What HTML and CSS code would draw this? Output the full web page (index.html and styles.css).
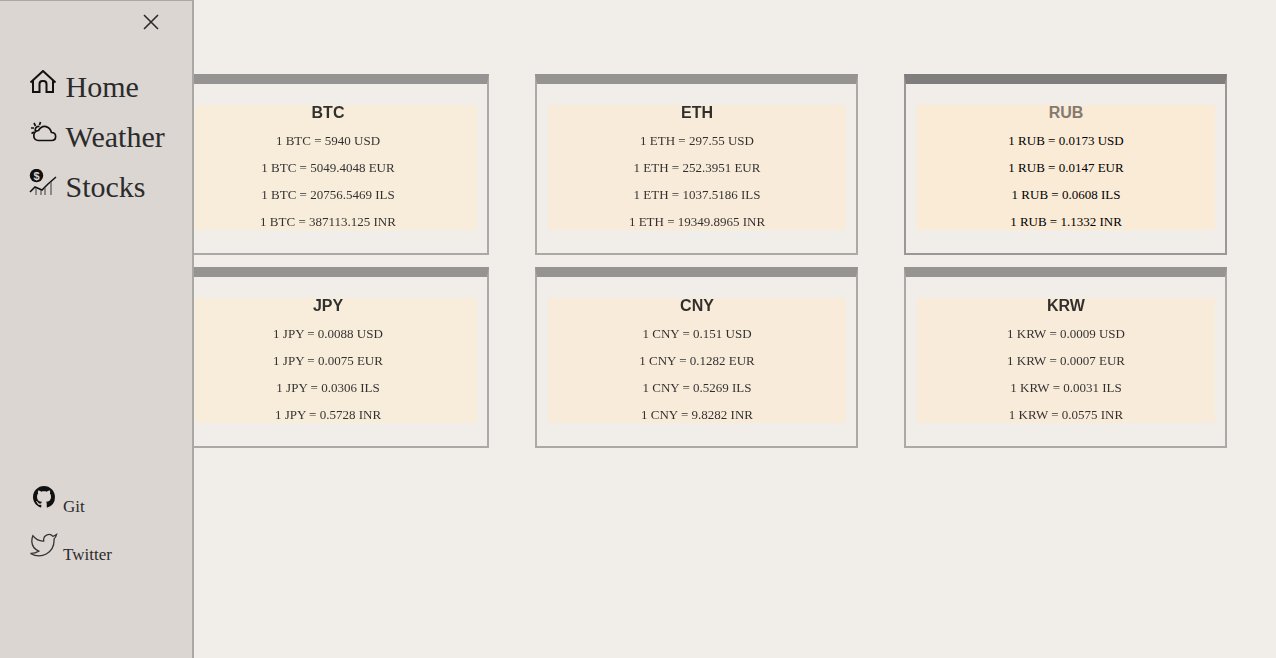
FILE: index.html
```html
<!DOCTYPE html>
<html lang="en">
<head>
    <meta charset="UTF-8">
    <meta name="viewport" content="width=device-width, initial-scale=1.0">
    <title>Crypto Rates</title>
    <link rel="stylesheet" href="styles.css">
</head>
<body>
    <aside class="sidebar">
        <button class="close-btn" aria-label="Close menu">
            <svg width="18" height="18" viewBox="0 0 18 18"><path d="M2 2l14 14M16 2L2 16" fill="none" stroke="#2b2b2b" stroke-width="1.6"/></svg>
        </button>

        <nav class="main-nav">
            <a class="nav-link" href="#">
                <svg class="nav-icon" width="30" height="30" viewBox="0 0 30 30" fill="none" stroke="#111" stroke-width="2"><path d="M1.500 12.500L14 1l12.500 11.500M4 10v12h6.500v-8q0-3 3-3h1q3 0 3 3v8H24V10"/></svg>
                <span>Home</span>
            </a>
            <a class="nav-link" href="#">
                <svg class="nav-icon" width="30" height="30" viewBox="0 0 30 30" fill="none" stroke="#111" stroke-width="1.700"><path d="M9.500 20.500h13c5.500 0 5.500-8 0-8C21 7 14 3 9.500 10.500c-6 .5-6.500 10 0 10z"/><path d="M7 12C5 9 7 6 10.500 6.500M5 3l1.500 3M2 8h3M2.500 13.500L5 12M11.500 2l-1 3"/></svg>
                <span>Weather</span>
            </a>
            <a class="nav-link" href="#">
                <svg class="nav-icon nav-icon-stocks" width="30" height="30" viewBox="0 0 30 30" fill="none"><circle cx="7.500" cy="6.500" r="6.700" fill="#111"/><text class="dollar" x="7.500" y="10.500" text-anchor="middle">$</text><path d="M1 23l5-5 7 3 6-6 8-7" stroke="#111" stroke-width="1.500"/><path d="M7 19v7M12 21v5M16 19v7M22 13v13" stroke="#555" stroke-width="1.200"/></svg>
                <span>Stocks</span>
            </a>
        </nav>

        <div class="social">
            <a class="social-link" href="#">
                <svg class="github-icon" width="22" height="22" viewBox="0 0 16 16" fill="#111"><path d="M8 0C3.580 0 0 3.580 0 8c0 3.540 2.290 6.530 5.470 7.590.4.070.55-.17.55-.38 0-.19-.01-.82-.01-1.490-2.010.37-2.530-.49-2.690-.94-.09-.23-.48-.94-.82-1.130-.28-.15-.68-.52-.01-.53.63-.01 1.080.58 1.230.82.72 1.210 1.870.87 2.330.66.070-.52.28-.87.51-1.070-1.780-.2-3.640-.89-3.640-3.950 0-.87.31-1.590.82-2.150-.08-.2-.36-1.020.08-2.120 0 0 .67-.21 2.200.82.64-.18 1.320-.27 2-.27.68 0 1.360.09 2 .27 1.530-1.040 2.200-.82 2.200-.82.44 1.100.16 1.920.08 2.120.51.56.82 1.270.82 2.150 0 3.070-1.870 3.750-3.650 3.950.29.25.54.73.54 1.480 0 1.070-.01 1.930-.01 2.200 0 .21.15.46.55.38A8.013 8.013 0 0016 8c0-4.420-3.580-8-8-8z"/></svg>
                <span>Git</span>
            </a>
            <a class="social-link" href="#">
                <svg class="twitter-icon" width="29" height="26" viewBox="0 0 24 22" fill="none" stroke="#333" stroke-width="1.100"><path d="M23 3a10.900 10.900 0 0 1-3 1.530 4.480 4.480 0 0 0-7.860 3v1A10.660 10.660 0 0 1 3 4s-4 9 5 13a11.640 11.640 0 0 1-7 2c9 5 20 0 20-11.500a4.500 4.500 0 0 0-.08-.83A7.720 7.720 0 0 0 23 3z"/></svg>
                <span>Twitter</span>
            </a>
        </div>
    </aside>

    <main class="rates-grid">
        <section class="rate-card">
            <div class="rate-body">
                <h3>BTC</h3>
                <p>1 BTC = 5940 USD</p>
                <p>1 BTC = 5049.4048 EUR</p>
                <p>1 BTC = 20756.5469 ILS</p>
                <p>1 BTC = 387113.125 INR</p>
            </div>
        </section>
        <section class="rate-card">
            <div class="rate-body">
                <h3>ETH</h3>
                <p>1 ETH = 297.55 USD</p>
                <p>1 ETH = 252.3951 EUR</p>
                <p>1 ETH = 1037.5186 ILS</p>
                <p>1 ETH = 19349.8965 INR</p>
            </div>
        </section>
        <section class="rate-card rate-card-active">
            <div class="rate-body">
                <h3>RUB</h3>
                <p>1 RUB = 0.0173 USD</p>
                <p>1 RUB = 0.0147 EUR</p>
                <p>1 RUB = 0.0608 ILS</p>
                <p>1 RUB = 1.1332 INR</p>
            </div>
        </section>
        <section class="rate-card">
            <div class="rate-body">
                <h3>JPY</h3>
                <p>1 JPY = 0.0088 USD</p>
                <p>1 JPY = 0.0075 EUR</p>
                <p>1 JPY = 0.0306 ILS</p>
                <p>1 JPY = 0.5728 INR</p>
            </div>
        </section>
        <section class="rate-card">
            <div class="rate-body">
                <h3>CNY</h3>
                <p>1 CNY = 0.151 USD</p>
                <p>1 CNY = 0.1282 EUR</p>
                <p>1 CNY = 0.5269 ILS</p>
                <p>1 CNY = 9.8282 INR</p>
            </div>
        </section>
        <section class="rate-card">
            <div class="rate-body">
                <h3>KRW</h3>
                <p>1 KRW = 0.0009 USD</p>
                <p>1 KRW = 0.0007 EUR</p>
                <p>1 KRW = 0.0031 ILS</p>
                <p>1 KRW = 0.0575 INR</p>
            </div>
        </section>
    </main>
</body>
</html>
```

FILE: styles.css
```css
html, body {
    height: 100%;
}
body {
    margin: 0;
    overflow: hidden;
    background-color: #f1eeea;
    color: #2b2b2b;
    font-family: "Liberation Serif", serif;
}
a {
    color: inherit;
    text-decoration: none;
}

/* sidebar lies over the first card column */
.sidebar {
    position: fixed;
    top: 0;
    left: 0;
    z-index: 2;
    box-sizing: border-box;
    width: 194px;
    height: 100%;
    padding-top: 12px;
    display: flex;
    flex-direction: column;
    background-color: #dbd6d2;
    border-top: 1px solid #aaa8a6;
    border-right: 2px solid #aaa8a6;
}
.close-btn {
    align-self: flex-start;
    margin-left: 142px;
    padding: 0;
    width: 18px;
    height: 18px;
    border: none;
    background: none;
    cursor: pointer;
}
.close-btn svg {
    display: block;
}
.main-nav {
    margin-top: 39px;
    padding-left: 29px;
}
.nav-link {
    display: flex;
    height: 50px;
    font-size: 30px;
    line-height: 34px;
}
.nav-icon {
    flex: none;
    width: 30px;
    margin-right: 6.500px;
}
.nav-icon-stocks {
    margin-top: -1px;
}
.dollar {
    font-family: "Liberation Sans", sans-serif;
    font-size: 11px;
    font-weight: bold;
    fill: #dbd6d2;
}
.social {
    margin-top: 249px;
    padding-left: 30px;
}
.social-link {
    display: flex;
    align-items: flex-end;
    height: 48px;
    font-size: 17px;
    line-height: 20px;
}
.github-icon {
    margin: 0 8px 9px 3px;
}
.twitter-icon {
    margin: 0 5px 8px -1px;
}

.rates-grid {
    display: grid;
    grid-template-columns: repeat(3, 323px);
    grid-auto-rows: 181px;
    column-gap: 46px;
    row-gap: 12px;
    padding: 74px 0 0 166px;
}
.rate-card {
    box-sizing: border-box;
    padding: 21px 10px 0 11px;
    border: 2px solid #999896;
    border-top: 10px solid #7f7e7c;
    color: #000;
    opacity: 0.8;
    will-change: opacity;
}
.rate-body {
    height: 125px;
    background-color: #faebd7;
    text-align: center;
}
.rate-body h3 {
    margin: 0 0 12px;
    font-family: "Liberation Sans", sans-serif;
    font-size: 16px;
    line-height: 16px;
    font-weight: bold;
}
.rate-body p {
    margin: 0 0 12px;
    font-size: 13px;
    line-height: 15px;
}
.rate-card-active {
    opacity: 1;
    will-change: auto;
}
.rate-card-active h3 {
    color: #857a70;
}
```
